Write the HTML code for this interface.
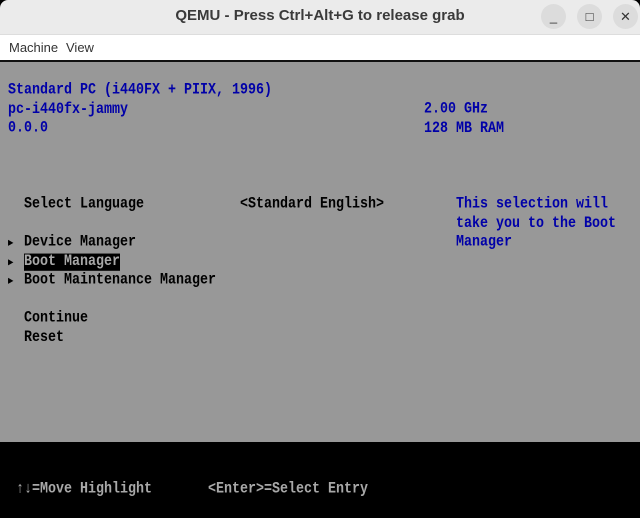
<!DOCTYPE html>
<html><head><style>
body{margin:0;width:640px;height:518px;overflow:hidden;background:#000;font-family:"Liberation Sans",sans-serif}
#tb{position:absolute;left:0;top:0;width:640px;height:34px;background:#ebebeb;border-radius:8px 8px 0 0}
#tt{position:absolute;left:0;width:640px;top:7px;text-align:center;font-size:15px;font-weight:bold;color:#3a3a3a}
.b{position:absolute;top:4px;width:25px;height:25px;border-radius:50%;background:#dcdcdc;color:#333;font-size:13px;text-align:center;line-height:25px}
#mb{position:absolute;top:34px;left:0;width:640px;height:26px;background:#fff;border-top:1px solid #ddd;font-size:13px;color:#333}
#mb span{position:absolute;top:5px}
#scr{position:absolute;top:62px;left:0;width:640px;height:380px;background:#989898}
.t{position:absolute;font-family:"Liberation Mono",monospace;font-size:13.33px;line-height:16.52px;white-space:pre;transform:scaleY(1.15);transform-origin:0 0;font-weight:bold}
.bl{color:#0000a8}.k{color:#000}.g{color:#a8a8a8}
.hl{background:#000;color:#a8a8a8}
.tri{display:inline-block;width:8px;font-size:9px;vertical-align:top}
</style></head><body>
<div id="tb"><div id="tt">QEMU - Press Ctrl+Alt+G to release grab</div>
<div class="b" style="left:541px">_</div><div class="b" style="left:577px">□</div><div class="b" style="left:613px">✕</div></div>
<div id="mb"><span style="left:9px">Machine</span><span style="left:66px">View</span></div>
<div style="position:absolute;top:60px;left:0;width:640px;height:2px;background:#111"></div>
<div id="scr"></div>
<div class="t bl" style="left:8px;top:82px">Standard PC (i440FX + PIIX, 1996)
pc-i440fx-jammy
0.0.0</div>
<div class="t bl" style="left:424px;top:101px">2.00 GHz
128 MB RAM</div>
<div class="t k" style="left:24px;top:196px">Select Language</div>
<div class="t k" style="left:240px;top:196px">&lt;Standard English&gt;</div>
<div class="t bl" style="left:456px;top:196px">This selection will
take you to the Boot
Manager</div>
<div class="t k" style="left:8px;top:234px"><span class="tri">▶</span> Device Manager
<span class="tri">▶</span> <span class="hl">Boot Manager</span>
<span class="tri">▶</span> Boot Maintenance Manager

  Continue
  Reset</div>
<div class="t g" style="left:16px;top:481px">↑↓=Move Highlight</div>
<div class="t g" style="left:208px;top:481px">&lt;Enter&gt;=Select Entry</div>
</body></html>
